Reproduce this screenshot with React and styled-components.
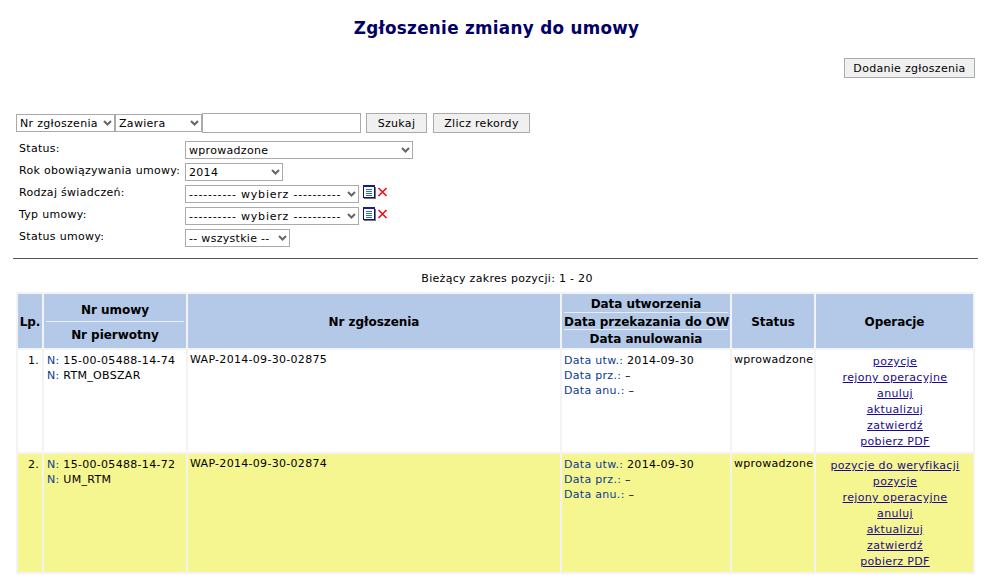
import React from 'react';
import styled, { createGlobalStyle } from 'styled-components';

const GlobalStyle = createGlobalStyle`
  html, body { margin: 0; padding: 0; background: #fff; }
  body { font-family: "DejaVu Sans", Verdana, sans-serif; font-size: 11px; letter-spacing: 0.3px; color: #000; }
`;

const chevron =
  "url(\"data:image/svg+xml,%3Csvg xmlns='http://www.w3.org/2000/svg' width='9' height='6'%3E%3Cpath d='M1 1l3.5 3.5L8 1' fill='none' stroke='%23666' stroke-width='2'/%3E%3C/svg%3E\")";

const Page = styled.div`
  width: 990px;
  height: 580px;
  overflow: hidden;
  box-sizing: border-box;
  padding: 18px 12px 0 13px;
`;

const Title = styled.h1`
  margin: 0;
  padding-left: 2px;
  height: 20px;
  line-height: 20px;
  text-align: center;
  font-size: 16.8px;
  font-weight: bold;
  color: #000066;
`;

const TopBar = styled.div`
  display: flex;
  justify-content: flex-end;
  margin: 20px 3px 0 0;
`;

const Button = styled.button`
  height: 20px;
  box-sizing: border-box;
  padding: 0;
  width: ${(p) => p.$w}px;
  margin-left: ${(p) => p.$ml || 0}px;
  border: 1px solid #aaa;
  background: #f0f0f0;
  font-family: inherit;
  font-size: 11px;
  letter-spacing: inherit;
  color: #000;
`;

const SearchRow = styled.div`
  display: flex;
  align-items: center;
  margin: 35px 0 0 3px;
  height: 20px;
`;

const Select = styled.select`
  appearance: none;
  box-sizing: border-box;
  width: ${(p) => p.$w}px;
  height: 18px;
  padding: 0 0 0 3px;
  margin: 0 ${(p) => p.$mr || 0}px 0 0;
  border: 1px solid #aaa;
  border-radius: 0;
  background: #fff ${chevron} no-repeat right 2px center;
  font-family: inherit;
  font-size: 11px;
  letter-spacing: ${(p) => p.$ls || 'inherit'};
  color: #000;
`;

const SearchInput = styled.input`
  box-sizing: border-box;
  width: 159px;
  height: 20px;
  margin: 0 5px 0 0;
  padding: 0;
  border: 1px solid #aaa;
`;

const FilterGrid = styled.div`
  display: grid;
  grid-template-columns: 166px auto;
  grid-auto-rows: 22px;
  justify-content: start;
  margin: 8px 0 0 6px;
`;

const Label = styled.div`
  padding-top: 1px;
  line-height: 14px;
  white-space: nowrap;
`;

const Field = styled.div`
  display: flex;
  align-items: flex-start;
  height: 22px;
`;

const IconLink = styled.svg`
  display: block;
  margin-top: ${(p) => p.$mt || 0}px;
`;

const Rule = styled.hr`
  margin: 7px 0 0;
  border: 0;
  height: 1px;
  background: #555;
`;

const Range = styled.div`
  margin-top: 13px;
  padding-left: 23px;
  text-align: center;
  line-height: 14px;
`;

const Table = styled.table`
  margin: 6px 0 0 3px;
  width: 959px;
  table-layout: fixed;
  border-collapse: separate;
  border-spacing: 2px;
  background: #f3f3f3;
  font-size: 11px;
`;

const Th = styled.th`
  box-sizing: border-box;
  background: #b4c9e8;
  padding: ${(p) => (p.$stacked ? 0 : '2px 0 0')};
  font-size: 12px;
  letter-spacing: -0.05px;
  font-weight: bold;
  text-align: center;
  height: 54px;
`;

const HeadLine = styled.div`
  line-height: ${(p) => p.$lh}px;
  padding-top: ${(p) => p.$pt || 0}px;
  margin: 0 2px;
  border-top: ${(p) => (p.$first ? '0' : '1px solid #e8eef8')};
  white-space: nowrap;
`;

const Td = styled.td`
  background: ${(p) => (p.$marked ? '#f6f691' : '#fff')};
  vertical-align: top;
  padding: ${(p) => p.$pt ?? 3}px ${(p) => p.$pr ?? 3}px 0 ${(p) => p.$pl ?? 2}px;
  line-height: 15px;
  height: ${(p) => p.$h}px;
  box-sizing: border-box;
  text-align: ${(p) => p.$align || 'left'};
  white-space: nowrap;
`;

const Key = styled.span`
  color: #0b3a8f;
`;

const OpLink = styled.a`
  display: block;
  line-height: 16px;
  letter-spacing: 0.35px;
  color: #1a0a8c;
  text-decoration: underline;
`;

const ListIcon = () => (
  <IconLink width="13" height="14" viewBox="0 0 13 14">
    <rect x="0" y="0" width="12" height="13" fill="#10106a" />
    <rect x="0" y="0" width="12" height="2" fill="#1a1a9c" />
    <rect x="1" y="2" width="10" height="10" fill="#fff" />
    <path d="M3 4.5h6M3 6.5h6M3 8.5h6M3 10.5h6" stroke="#1f6fe0" strokeWidth="1" />
    <rect x="12" y="2" width="1" height="12" fill="#777" />
    <rect x="1" y="13" width="12" height="1" fill="#777" />
  </IconLink>
);

const CrossIcon = ({ mt }) => (
  <IconLink $mt={mt} width="12" height="10" viewBox="0 0 12 10">
    <path d="M2.5 1l8 8M10.5 1l-8 8" stroke="#f01020" strokeWidth="1.7" />
  </IconLink>
);

const rows = [
  {
    lp: '1.',
    umowa: '15-00-05488-14-74',
    pierwotny: 'RTM_OBSZAR',
    nr: 'WAP-2014-09-30-02875',
    utw: '2014-09-30',
    h: 102,
    ops: ['pozycje', 'rejony operacyjne', 'anuluj', 'aktualizuj', 'zatwierdź', 'pobierz PDF'],
  },
  {
    lp: '2.',
    umowa: '15-00-05488-14-72',
    pierwotny: 'UM_RTM',
    nr: 'WAP-2014-09-30-02874',
    utw: '2014-09-30',
    h: 118,
    marked: true,
    ops: ['pozycje do weryfikacji', 'pozycje', 'rejony operacyjne', 'anuluj', 'aktualizuj', 'zatwierdź', 'pobierz PDF'],
  },
];

export default function App() {
  return (
    <Page>
      <GlobalStyle />
      <Title>Zgłoszenie zmiany do umowy</Title>
      <TopBar>
        <Button $w={131}>Dodanie zgłoszenia</Button>
      </TopBar>

      <SearchRow>
        <Select $w={99}><option>Nr zgłoszenia</option></Select>
        <Select $w={87}><option>Zawiera</option></Select>
        <SearchInput />
        <Button $w={61}>Szukaj</Button>
        <Button $w={97} $ml={6}>Zlicz rekordy</Button>
      </SearchRow>

      <FilterGrid>
        <Label>Status:</Label>
        <Field><Select $w={228}><option>wprowadzone</option></Select></Field>
        <Label>Rok obowiązywania umowy:</Label>
        <Field><Select $w={98}><option>2014</option></Select></Field>
        <Label>Rodzaj świadczeń:</Label>
        <Field>
          <Select $w={174} $mr={4} $ls="0.8px"><option>---------- wybierz ----------</option></Select>
          <ListIcon />
          <CrossIcon mt={2} />
        </Field>
        <Label>Typ umowy:</Label>
        <Field>
          <Select $w={174} $mr={4} $ls="0.8px"><option>---------- wybierz ----------</option></Select>
          <ListIcon />
          <CrossIcon mt={2} />
        </Field>
        <Label>Status umowy:</Label>
        <Field><Select $w={105}><option>-- wszystkie --</option></Select></Field>
      </FilterGrid>

      <Rule />
      <Range>Bieżący zakres pozycji: 1 - 20</Range>

      <Table>
        <colgroup>
          <col style={{ width: 24 }} />
          <col style={{ width: 142 }} />
          <col style={{ width: 372 }} />
          <col style={{ width: 168 }} />
          <col style={{ width: 82 }} />
          <col />
        </colgroup>
        <thead>
          <tr>
            <Th>Lp.</Th>
            <Th $stacked>
              <HeadLine $first $lh={22} $pt={5}>Nr umowy</HeadLine>
              <HeadLine $lh={26}>Nr pierwotny</HeadLine>
            </Th>
            <Th>Nr zgłoszenia</Th>
            <Th $stacked>
              <HeadLine $first $lh={16} $pt={2}>Data utworzenia</HeadLine>
              <HeadLine $lh={14} $pt={2}>Data przekazania do OW</HeadLine>
              <HeadLine $lh={18}>Data anulowania</HeadLine>
            </Th>
            <Th>Status</Th>
            <Th>Operacje</Th>
          </tr>
        </thead>
        <tbody>
          {rows.map((r) => (
            <tr key={r.lp}>
              <Td $marked={r.marked} $h={r.h} $align="right">{r.lp}</Td>
              <Td $marked={r.marked} $h={r.h} $pl={3}>
                <Key>N:</Key> {r.umowa}
                <br />
                <Key>N:</Key> {r.pierwotny}
              </Td>
              <Td $marked={r.marked} $h={r.h} $pt={2}>{r.nr}</Td>
              <Td $marked={r.marked} $h={r.h}>
                <Key>Data utw.:</Key> {r.utw}
                <br />
                <Key>Data prz.:</Key> –
                <br />
                <Key>Data anu.:</Key> –
              </Td>
              <Td $marked={r.marked} $h={r.h} $pt={2}>wprowadzone</Td>
              <Td $marked={r.marked} $h={r.h} $pt={4} $pr={1} $align="center">
                {r.ops.map((op) => (
                  <OpLink href="#" key={op}>{op}</OpLink>
                ))}
              </Td>
            </tr>
          ))}
        </tbody>
      </Table>
    </Page>
  );
}
